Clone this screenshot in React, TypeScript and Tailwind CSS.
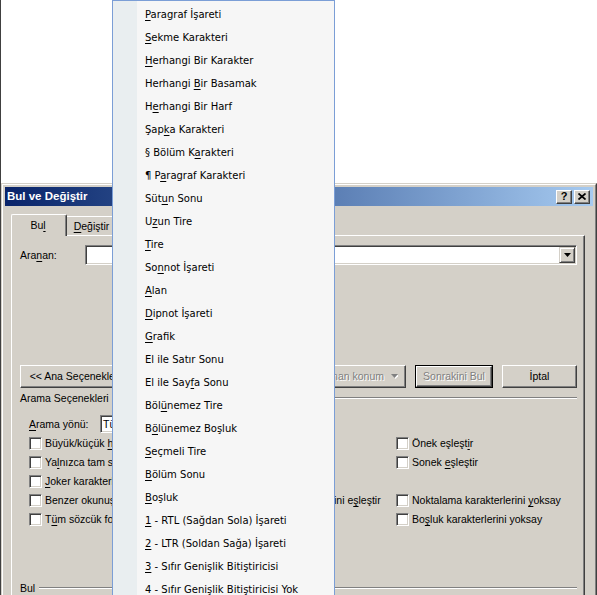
import React from "react";

const U = ({ children }: { children: React.ReactNode }) => (
  <span className="underline decoration-1 underline-offset-[2px]">{children}</span>
);

const menuItems: Array<[string, string, string]> = [
  ["", "P", "aragraf İşareti"],
  ["", "S", "ekme Karakteri"],
  ["", "H", "erhangi Bir Karakter"],
  ["Herhangi ", "B", "ir Basamak"],
  ["H", "e", "rhangi Bir Harf"],
  ["Şap", "k", "a Karakteri"],
  ["§ Bölüm K", "a", "rakteri"],
  ["¶ P", "a", "ragraf Karakteri"],
  ["Süt", "u", "n Sonu"],
  ["U", "z", "un Tire"],
  ["", "T", "ire"],
  ["So", "n", "not İşareti"],
  ["", "A", "lan"],
  ["", "D", "ipnot İşareti"],
  ["", "G", "rafik"],
  ["El ile Satır Sonu", "", ""],
  ["El ile Say", "f", "a Sonu"],
  ["Böl", "ü", "nemez Tire"],
  ["B", "ö", "lünemez Boşluk"],
  ["", "S", "eçmeli Tire"],
  ["", "B", "ölüm Sonu"],
  ["", "B", "oşluk"],
  ["", "1", " - RTL (Sağdan Sola) İşareti"],
  ["", "2", " - LTR (Soldan Sağa) İşareti"],
  ["", "3", " - Sıfır Genişlik Bitiştiricisi"],
  ["", "4", " - Sıfır Genişlik Bitiştiricisi Yok"],
];

const raised =
  "bg-[#d4d0c8] border border-t-white border-l-white border-r-[#404040] border-b-[#404040] shadow-[inset_-1px_-1px_0_#808080]";
const sunken =
  "bg-white border border-t-[#808080] border-l-[#808080] border-r-white border-b-white shadow-[inset_1px_1px_0_#404040,inset_-1px_-1px_0_#d4d0c8]";
const disabled = "text-[#808080] [text-shadow:1px_1px_0_#ffffff]";

const Check = () => <div className={`w-[13px] h-[13px] shrink-0 ${sunken}`} />;

const CheckItem = ({ children }: { children: React.ReactNode }) => (
  <div className="flex items-center whitespace-nowrap">
    <Check />
    <span className="ml-[3px]">{children}</span>
  </div>
);

const Arrow = ({ color = "#000" }: { color?: string }) => (
  <svg width="7" height="4" viewBox="0 0 7 4" className="shrink-0">
    <polygon points="0,0 7,0 3.5,4" fill={color} />
  </svg>
);

function Dialog() {
  return (
    <div className="border border-t-[#d4d0c8] border-l-[#d4d0c8] border-r-[#404040] border-b-[#404040] bg-[#d4d0c8]">
      <div className="border border-t-white border-l-white border-r-[#808080] border-b-[#808080] pt-[2px] pl-[2px] pr-[2px] h-[480px]">
        {/* title bar */}
        <div className="h-[19px] flex items-center bg-gradient-to-r from-[#0a246a] to-[#a6caf0] pl-[2px] pr-[3px]">
          <span className="text-white font-bold text-[11.5px]">Bul ve Değiştir</span>
          <div className="ml-auto flex gap-[2px]">
            <div className={`w-[16px] h-[14px] flex items-center justify-center ${raised}`}>
              <span className="font-bold text-[11px] leading-none">?</span>
            </div>
            <div className={`w-[16px] h-[14px] flex items-center justify-center ${raised}`}>
              <svg width="8" height="7" viewBox="0 0 8 7">
                <path d="M0.5 0.5 L7.5 6.5 M7.5 0.5 L0.5 6.5" stroke="#000" strokeWidth="1.7" />
              </svg>
            </div>
          </div>
        </div>

        {/* tabs + panel */}
        <div className="ml-[6px] mr-[8px]">
          <div className="flex items-end pt-[8px]">
            <div className="relative z-10 -mb-[1px] h-[22px] w-[56px] flex items-center justify-center pr-[2px] bg-[#d4d0c8] border-t border-l border-white border-r border-r-[#404040] rounded-t-[2px] shadow-[inset_-1px_0_0_#808080]">
              <span>
                Bu<U>l</U>
              </span>
            </div>
            <div className="h-[19px] w-[50px] flex items-center justify-center bg-[#d4d0c8] border-t border-white border-r border-r-[#404040] rounded-tr-[2px] shadow-[inset_-1px_0_0_#808080]">
              <span>
                <U>D</U>eğiştir
              </span>
            </div>
          </div>
          <div className="h-[400px] border-t border-l border-white border-r border-r-[#404040] shadow-[inset_-1px_0_0_#808080] pl-[8px] pr-[7px] flex flex-col">
            {/* Aranan */}
            <div className="mt-[9px] h-[20px] flex items-center">
              <span className="w-[65px] shrink-0">
                Ara<U>n</U>an:
              </span>
              <div className={`relative flex-1 h-[20px] ${sunken}`}>
                <div className="absolute right-[1px] top-[1px] bottom-[1px] w-[16px] flex items-center justify-center bg-[#d4d0c8] border border-t-[#d4d0c8] border-l-[#d4d0c8] border-r-[#404040] border-b-[#404040] shadow-[inset_1px_1px_0_#ffffff,inset_-1px_-1px_0_#808080]">
                  <Arrow />
                </div>
              </div>
            </div>

            {/* buttons */}
            <div className="mt-[100px] h-[23px] flex">
              <div className={`w-[108px] h-[23px] flex items-center justify-center whitespace-nowrap ${raised}`}>
                &lt;&lt; Ana Seçenekler
              </div>
              <div className={`ml-auto w-[150px] h-[23px] flex items-center justify-end gap-[7px] pr-[7px] whitespace-nowrap ${raised}`}>
                <span className={disabled}>Bulunan konum</span>
                <svg width="7" height="5" viewBox="0 0 7 5" className="shrink-0">
                  <polygon points="1,1 8,1 4.5,5" fill="#ffffff" />
                  <polygon points="0,0 7,0 3.5,4" fill="#808080" />
                </svg>
              </div>
              <div className="ml-[9px] w-[78px] h-[23px] border border-black">
                <div className={`w-full h-full flex items-center justify-center whitespace-nowrap ${raised}`}>
                  <span className={disabled}>Sonrakini Bul</span>
                </div>
              </div>
              <div className={`ml-[9px] w-[75px] h-[23px] flex items-center justify-center ${raised}`}>
                İptal
              </div>
            </div>

            {/* Arama Seçenekleri */}
            <div className="mt-[3px] h-[14px] flex items-center">
              <span className="whitespace-nowrap">Arama Seçenekleri</span>
              <div className="flex-1 ml-[4px] h-[2px] border-t border-t-[#808080] border-b border-b-white" />
            </div>

            {/* Arama yönü */}
            <div className="mt-[10px] h-[18px] pl-[9px] flex items-center">
              <span className="w-[71px] shrink-0">
                <U>A</U>rama yönü:
              </span>
              <div className={`w-[120px] h-[18px] flex items-center pl-[2px] ${sunken}`}>Tümü</div>
            </div>

            {/* checkboxes */}
            <div className="mt-[1px] pl-[9px] grid grid-cols-[367px_1fr] auto-rows-[19px]">
              <CheckItem>
                Büyük/küçük <U>h</U>arf eşleştir
              </CheckItem>
              <CheckItem>
                Önek eşleşt<U>i</U>r
              </CheckItem>
              <CheckItem>
                Ya<U>l</U>nızca tam sözcükleri bul
              </CheckItem>
              <CheckItem>
                Sonek <U>e</U>şleştir
              </CheckItem>
              <CheckItem>
                <U>J</U>oker karakterler kullan
              </CheckItem>
              <div />
              <CheckItem>
                <span className="inline-block w-[289px] overflow-hidden align-bottom">Benzer okunuşlu sözcükleri</span>
                ini e<U>ş</U>leştir
              </CheckItem>
              <CheckItem>
                Noktalama karakterlerini <U>y</U>oksay
              </CheckItem>
              <CheckItem>
                T<U>ü</U>m sözcük formlarını bul
              </CheckItem>
              <CheckItem>
                Bo<U>ş</U>luk karakterlerini yoksay
              </CheckItem>
            </div>

            {/* Bul */}
            <div className="mt-[52px] h-[14px] flex items-center">
              <span>Bul</span>
              <div className="flex-1 ml-[4px] h-[2px] border-t border-t-[#808080] border-b border-b-white" />
            </div>
          </div>
        </div>
      </div>
    </div>
  );
}

function Menu() {
  return (
    <div className="absolute left-[111px] top-0 w-[223px] h-[640px] border border-[#7b9ed6] bg-[#f6f6f6] flex font-['DejaVu_Sans',sans-serif] text-[10px] text-black">
      <div className="w-[24px] shrink-0 bg-[#e9eef0]" />
      <div className="flex-1 flex flex-col pt-[2px]">
        {menuItems.map(([a, b, c], i) => (
          <div key={i} className="h-[23px] flex items-center pl-[8px] whitespace-nowrap">
            <span>
              {a}
              {b && <U>{b}</U>}
              {c}
            </span>
          </div>
        ))}
      </div>
    </div>
  );
}

export default function App() {
  return (
    <div className="relative w-[597px] h-[595px] overflow-hidden bg-white border-l border-l-[#404040] font-['Liberation_Sans',Arial,sans-serif] text-[10.5px] text-black leading-none">
      <div className="h-[183px]" />
      <Dialog />
      <Menu />
    </div>
  );
}
